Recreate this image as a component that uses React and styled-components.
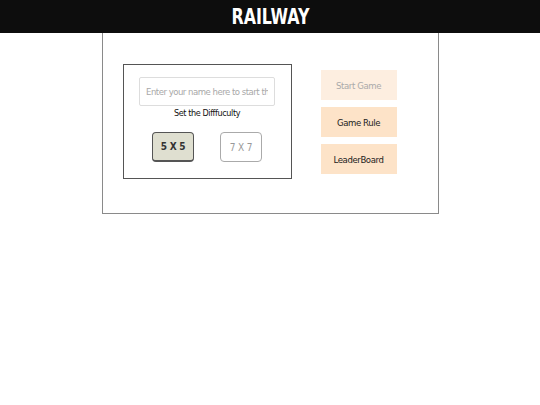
import React, { useState } from 'react';
import styled, { createGlobalStyle } from 'styled-components';

const GlobalStyle = createGlobalStyle`
  body {
    margin: 0;
    background: #fff;
    font-family: "DejaVu Sans Condensed", "DejaVu Sans", sans-serif;
  }
`;

const Header = styled.header`
  height: 33px;
  background: #0d0d0d;
  display: flex;
  align-items: center;
  justify-content: center;
`;

const Title = styled.h1`
  margin: 0;
  color: #fff;
  font-size: 21px;
  font-weight: bold;
  transform: scaleX(0.84);
`;

const Main = styled.main`
  width: 337px;
  height: 181px;
  box-sizing: border-box;
  margin: 0 auto;
  border: 1px solid #8a8a8a;
  border-top: none;
  padding: 31px 0 0 20px;
  display: flex;
  align-items: flex-start;
  gap: 29px;
`;

const SetupBox = styled.section`
  width: 169px;
  height: 115px;
  box-sizing: border-box;
  border: 1px solid #555;
  padding: 12px 15px 0;
  display: flex;
  flex-direction: column;
  align-items: center;
`;

const NameInput = styled.input`
  width: 136px;
  height: 29px;
  box-sizing: border-box;
  border: 1px solid #ddd;
  border-radius: 2px;
  padding: 0 6px;
  font-family: inherit;
  font-size: 9.5px;
  letter-spacing: -0.5px;
  color: #333;
  outline: none;
  &::placeholder {
    color: #a8a8a8;
  }
`;

const Label = styled.div`
  margin-top: 2px;
  font-size: 9px;
  letter-spacing: -0.4px;
  color: #111;
`;

const SizeRow = styled.div`
  margin-top: 14px;
  display: flex;
  gap: 26px;
`;

const SizeButton = styled.button`
  width: 42px;
  height: 30px;
  box-sizing: border-box;
  border-radius: 4px;
  font-family: inherit;
  font-size: 10px;
  letter-spacing: -0.2px;
  padding: 0;
  cursor: pointer;
  background: ${p => (p.$active ? '#dfdfd0' : '#fff')};
  border: 1px solid ${p => (p.$active ? '#555' : '#aaa')};
  border-bottom-width: ${p => (p.$active ? '2px' : '1px')};
  color: ${p => (p.$active ? '#333' : '#999')};
  font-weight: ${p => (p.$active ? 'bold' : 'normal')};
`;

const Menu = styled.nav`
  margin-top: 6px;
  display: flex;
  flex-direction: column;
  gap: 7px;
`;

const MenuButton = styled.button`
  width: 76px;
  height: 30px;
  border: none;
  padding: 0;
  font-family: inherit;
  font-size: 9.5px;
  letter-spacing: -0.4px;
  cursor: pointer;
  background: ${p => (p.$disabled ? '#fdeee0' : '#fde3c8')};
  color: ${p => (p.$disabled ? '#aaa' : '#222')};
`;

export default function App() {
  const [size, setSize] = useState(5);
  const [name, setName] = useState('');

  return (
    <>
      <GlobalStyle />
      <Header>
        <Title>RAILWAY</Title>
      </Header>
      <Main>
        <SetupBox>
          <NameInput
            value={name}
            onChange={e => setName(e.target.value)}
            placeholder="Enter your name here to start the game"
          />
          <Label>Set the Difffuculty</Label>
          <SizeRow>
            <SizeButton $active={size === 5} onClick={() => setSize(5)}>5 X 5</SizeButton>
            <SizeButton $active={size === 7} onClick={() => setSize(7)}>7 X 7</SizeButton>
          </SizeRow>
        </SetupBox>
        <Menu>
          <MenuButton $disabled={name === ''}>Start Game</MenuButton>
          <MenuButton>Game Rule</MenuButton>
          <MenuButton>LeaderBoard</MenuButton>
        </Menu>
      </Main>
    </>
  );
}
